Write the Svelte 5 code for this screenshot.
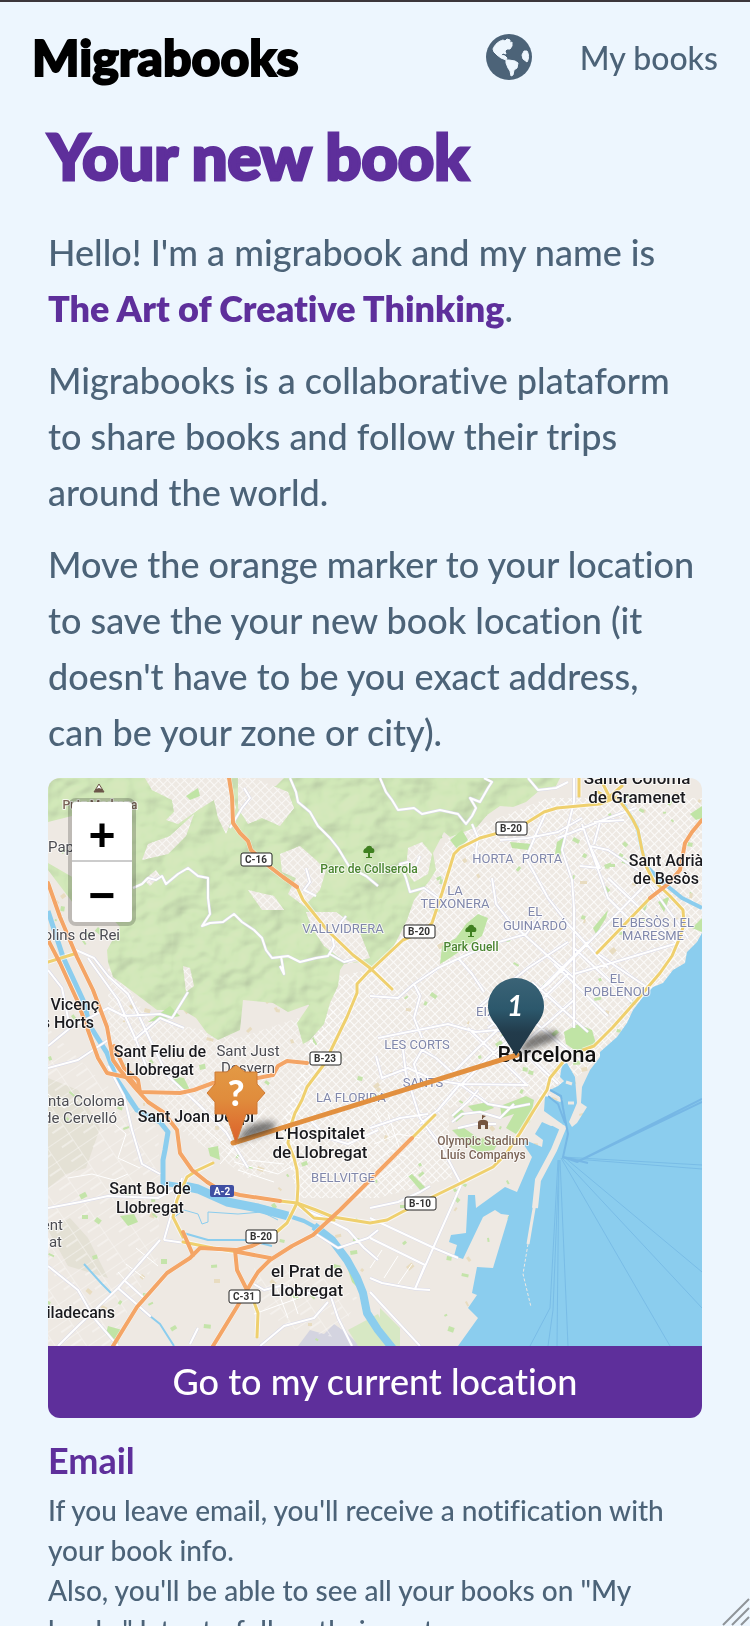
<script lang="ts">
  type Road = { kind: string; d: string };
  type Label = { kind: string; x: number; y: number; text: string; anchor?: string };

  const greens = [
    "M0 0H97L104 8 130 12 150 6 180 0H190L204 10 228 8 236 0H512L508 8 492 12 478 24 465 29 452 28 439 37 429 49 402 59 396 54 385 75 388 92 382 102 366 122 359 142 350 160 342 175 322 192 312 184 296 186 292 192 290 208 282 225 276 246 262 262 255 266 249 245 262 226 240 234 225 225 195 222 192 252 170 262 159 255 148 240 135 232 109 232 88 216 65 199 60 184 59 172 72 149 60 136 25 125 0 92V85L26 100 32 66 24 38 0 44Z",
    "M352 550L332 530V568H352Z", "M330 536L346 568H310L300 552Z",
  ];
  const clearings = [
    "M97 0H180L188 30 178 56 170 40 166 22 150 32 130 46 118 42 126 34 124 22 104 12Z",
    "M190 0H206L240 14 246 30 232 48 214 40 200 46 190 30Z",
    "M146 36L138 58 120 76 94 82 100 66 122 58Z",
    "M232 76L252 68 268 82 278 92 272 112 256 128 240 116 248 100 234 94Z",
    "M200 112L226 118 236 132 214 132Z",
    "M135 188L142 190 146 208 138 214Z",
    "M258 134L288 134 310 150 322 180 300 186 276 168 264 150Z",
    "M360 70L374 64 384 76 380 96 366 104 358 92Z",
    "M96 102L108 92 112 98 102 108Z",
  ];
  const parks = [
    "M418 146L430 136 440 140 434 158 402 180 392 186 394 168 408 160Z",
    "M516 254L530 246 544 252 548 266 532 276 518 266Z",
    "M404 336L412 330 418 336 408 344Z", "M420 328L440 324 446 330 428 336Z",
    "M452 328L478 318 486 322 482 344 468 356 458 350 466 336 454 340Z",
    "M404 352L416 350 430 360 452 362 446 372 430 374 418 366Z",
    "M402 62L414 52 420 62 410 72Z", "M462 64L484 66 480 72 464 70Z",
    "M509 64L518 58 512 78 507 76Z", "M642 36L654 28V40L648 42Z",
    "M610 124L622 118 616 134Z", "M545 150L560 132 558 140 548 156Z",
    "M100 244L122 228 132 238 112 242Z", "M72 438L86 436 90 444 80 448Z",
    "M60 548L74 552 70 566 58 556Z", "M124 298L136 300 142 312 130 310Z",
    "M160 370L170 368 172 382 162 378Z", "M644 150L654 140V154Z",
    "M298 486L310 496 312 512 304 504Z", "M138 18L150 10 152 18 142 22Z",
    "M364 396L378 410 372 412 360 398Z", "M590 130L600 124 596 136Z",
  ];
  const sands = ["M0 410V300L30 312 52 350 38 390 18 396Z", "M0 452L22 440 40 460 60 500 20 488Z"];

  const sea =
    "M654 155L649 164 639 174 637 185 625 192 615 205 605 209 595 219 585 232 579 245 569 259 552 274 552 279 542 292 534 309 533 325 539 329 529 345 524 349 521 344 529 325 527 299 519 285 514 287 512 299 516 303 510 308 502 312 515 322 512 324 497 318 496 333 514 346 503 348 494 344 487 356 495 362 494 369 477 362 476 367 484 379 469 414 457 409 428 430 427 417 420 417 418 455 403 457 401 464 409 467 406 478 415 481 435 439 447 432 453 436 461 437 445 490 429 489 424 515 429 517 420 530 430 540 410 568H654Z";
  const rivers = [
    { w: 5, d: "M0 133L15 179 35 222 42 248 59 275 69 302 89 332 112 344 120 354 117 372 115 382 115 405 145 410" },
    { w: 9, d: "M136 408L150 411 179 424 210 430 240 438" },
    { w: 4, d: "M238 437L256 443 269 450" },
    { w: 8, d: "M266 448L284 462 299 482 309 500 315 515 319 535 330 552 346 572" },
    { w: 4, d: "M572 20L589 49 594 72 599 89 612 102 634 120 654 130" },
    { w: 2, d: "M92 530L112 546 126 568M36 486L54 506 64 516M132 454L160 462 200 462 224 468" },
    { w: 1, d: "M125 440L136 432 150 436 154 446 160 444V434L190 436 214 434 230 442" },
  ];
  const ferries =
    "M514 379L654 387M515 380L654 391M516 379L654 494M514 380L654 530M513 380L622 568M512 382L520 568M511 382L509 568M511 382L505 532 500 568M510 382L502 530 482 568";
  const lanes = "M502 312L513 318 515 330 520 356 515 379 529 384 654 324M500 318L510 326 517 345M529 384L654 321M515 379L540 385";

  const hillRoads =
    "M85 110L94 106 100 100 108 102 114 98 118 106 130 96 140 90 150 98 160 100 160 120 162 136 154 148 162 145 175 144 186 136 194 144 206 152 214 160 218 172 224 180 240 178 252 184 268 180 280 178 286 168 284 156 298 138M242 0L248 14 250 24 262 34 270 48 282 60 290 70 302 90 318 98 330 108M332 0L338 14 344 22 350 32 366 30 374 36 392 32 410 36 418 46 424 38 428 30 422 20 432 24 440 10 444 4 436 0M424 46L430 60 428 72 430 86M372 78L366 92 360 84 352 86 358 100 362 114 376 110 390 120M282 176L296 184 310 180M258 90L262 104 256 112 268 118M480 0L490 12 508 10 520 4M233 178L236 196 232 188M196 10L202 20 194 30 182 50";
  const streets =
    "M28 172L46 180 60 198 80 216 92 240 104 266 120 298 150 326 178 354 200 390M40 180L70 222 88 262 98 288M0 192L14 210 22 250 0 268M22 250L60 230 76 238 112 236 124 240 140 214M86 262L112 240 136 250M0 290L30 282 60 262M0 430L32 424 60 418 110 420 132 408M60 288L76 318 84 352 94 386 112 396M116 462L128 420 134 400M116 462L158 468 210 478M112 462L70 510 30 548 10 568M0 488L30 512 46 540 70 568M70 510L102 538 84 522M76 502L96 520M212 568L236 548 266 540 280 524M252 430L276 440 300 452M268 456L290 470 320 460 330 452M300 452L316 470 330 482M280 510L290 540 304 568M142 566L150 550M206 506L216 512 232 508 250 512 278 520M260 340L280 360 300 366 330 352M322 430L350 424 372 414 382 408M322 440L386 470 410 480M322 460L377 487 367 511 334 505 322 500M413 407L386 468 367 511 382 512M322 514L372 568M328 278L334 300 360 290 386 302 412 306 480 307M355 272L358 296 372 340 394 370 412 404M322 350L352 340 380 336M410 300L388 280 374 272 366 286 374 312M330 260L360 254 400 246 428 254 470 250M322 218L350 220 366 206 390 190 416 178 444 166 478 156 494 136M366 206L372 218 366 240 374 260M410 180L424 196 436 214M444 100L448 126 462 144 480 160 500 178 526 200 526 240M526 0V24L520 48 514 72 524 102 526 130 526 250M500 30L488 56 478 80 500 120 520 146 560 190M452 62L480 60 510 54 534 40M510 60L560 40 588 30M532 88L552 90 542 68 560 72 572 80 590 92M546 66L552 44M546 44L576 42M534 46L560 120 590 150M526 196L560 186 630 165M440 250L500 206 600 104M452 262L520 196M480 262L526 222M464 240L540 164M430 230L480 190 520 164M400 300L430 270 482 222M412 308L440 280 470 254M412 306L390 332 372 346M412 306L440 326 462 330 482 326M404 338L422 322 430 312M440 240L510 306M420 250L480 308M462 224L532 282M484 204L540 254M506 186L560 238M526 170L584 224M550 176L600 210M560 100L630 166M600 104L640 160M404 344L414 336 432 334 452 340 466 326M410 350L428 346 448 346";
  const lanesLocal =
    "M152 330L184 350M160 322L206 370M140 336L196 384M206 348L172 386M218 330L180 376M186 384L230 396 244 388M190 392L226 404M200 382L236 386M0 316L16 330 30 322M60 340L78 356 70 380 92 390M20 400L44 396 66 402 80 396M206 536L262 516M228 508L240 540M240 506L250 536M96 500L78 486M110 488L88 470M86 512L70 494M322 388L344 372 360 380M330 402L352 386M340 414L368 392M326 366L350 356 372 360M334 472L322 490M350 478L336 500M364 486L350 506M340 336L352 372M326 330L342 360";

  const roads: Road[] = [
    { kind: "trunk", d: "M531 0V18" },
    { kind: "trunk", d: "M249 109L255 122 279 152 305 177 322 190 344 211" },
    { kind: "trunk", d: "M322 193L355 162 374 154 384 145 394 115 402 89 406 76 412 70 432 60 472 49 496 34 509 30 552 26 569 19 580 34 585 42 590 52 594 72 598 88 605 102 622 118 635 132 636 146 632 159 624 178 612 195 589 222 565 249 546 268 535 272" },
    { kind: "trunk", d: "M515 284L502 300 499 312 486 332 472 355 458 376 445 389 409 407 372 425 354 434 339 442 322 445 285 439 268 432 249 425" },
    { kind: "trunk", d: "M322 192L309 206 309 215 299 239 282 274 277 285 259 309 254 322 247 335 242 350 240 365 246 380 249 392 250 408 249 425 239 445 224 458" },
    { kind: "trunk", d: "M165 385L148 393 139 399 129 422 125 439 135 459" },
    { kind: "trunk", d: "M199 512L206 524 210 535 209 559" },
    { kind: "trunk", d: "M387 337L364 360" },
    { kind: "trunk", d: "M602 120L549 175" },
    { kind: "trunk", d: "M135 464L165 470 190 474M0 184L26 176" },
    { kind: "trunk", d: "M232 423L249 425 266 440 286 442" },
    { kind: "trunk", d: "M550 14L560 20 574 8M552 0L560 16" },
    { kind: "motorway", d: "M181 0L184 19 185 45 192 55 200 63 203 72 214 82 222 89 235 99 249 109" },
    { kind: "motorway", d: "M0 105L12 139 29 179 45 212 59 249 65 282 72 292 89 312 100 324 115 334 129 352 132 375 144 392 159 404 172 412 192 417 232 423" },
    { kind: "motorway", d: "M0 162L12 185 29 222 50 280 59 295 82 300 92 314 132 315 146 312 165 305 200 302 225 297 230 288 239 283 259 285" },
    { kind: "motorway", d: "M66 268L76 290 90 302 92 314" },
    { kind: "motorway", d: "M224 458L204 468 189 472 152 470 142 480 119 495 89 529 76 550 65 568" },
    { kind: "motorway", d: "M364 360L329 395 292 432 265 457 244 468 222 482 210 494 205 502 195 519 165 568" },
    { kind: "motorway", d: "M135 454L145 477M187 472L189 492 199 512M190 474L222 480" },
    { kind: "motorway", d: "M654 42L644 54 637 65 632 92 620 106 602 120" },
  ];

  const shields = [
    { x: 208, y: 81, text: "C-16" }, { x: 463, y: 50, text: "B-20" },
    { x: 371, y: 153, text: "B-20" }, { x: 277, y: 280, text: "B-23" },
    { x: 213, y: 458, text: "B-20" }, { x: 196, y: 518, text: "C-31" },
    { x: 372, y: 425, text: "B-10" },
  ];

  const labels: Label[] = [
    { kind: "peak", x: 52, y: 31, text: "Puig Madrona" },
    { kind: "town", x: 0, y: 74, text: "Papiol", anchor: "start" },
    { kind: "town", x: 72, y: 162, text: "Molins de Rei", anchor: "end" },
    { kind: "town", x: 200, y: 278, text: "Sant Just" },
    { kind: "town", x: 200, y: 295, text: "Desvern" },
    { kind: "town", x: 77, y: 328, text: "Santa Coloma", anchor: "end" },
    { kind: "town", x: 69, y: 345, text: "de Cervelló", anchor: "end" },
    { kind: "town", x: 15, y: 452, text: "Sant Vicent", anchor: "end" },
    { kind: "town", x: 14, y: 469, text: "Begat", anchor: "end" },
    { kind: "city", x: 51, y: 232, text: "Sant Vicenç", anchor: "end" },
    { kind: "city", x: 46, y: 250, text: "dels Horts", anchor: "end" },
    { kind: "city", x: 112, y: 279, text: "Sant Feliu de" },
    { kind: "city", x: 112, y: 297, text: "Llobregat" },
    { kind: "city", x: 148, y: 344, text: "Sant Joan Despí" },
    { kind: "city", x: 102, y: 416, text: "Sant Boi de" },
    { kind: "city", x: 102, y: 435, text: "Llobregat" },
    { kind: "city", x: 67, y: 540, text: "Viladecans", anchor: "end" },
    { kind: "city large", x: 259, y: 499, text: "el Prat de" },
    { kind: "city large", x: 259, y: 518, text: "Llobregat" },
    { kind: "city large", x: 272, y: 361, text: "L'Hospitalet" },
    { kind: "city large", x: 272, y: 380, text: "de Llobregat" },
    { kind: "city large", x: 589, y: 6, text: "Santa Coloma" },
    { kind: "city large", x: 589, y: 25, text: "de Gramenet" },
    { kind: "city", x: 618, y: 88, text: "Sant Adrià" },
    { kind: "city", x: 618, y: 106, text: "de Besòs" },
    { kind: "capital", x: 499, y: 284, text: "Barcelona" },
    { kind: "district", x: 295, y: 155, text: "VALLVIDRERA" },
    { kind: "district", x: 445, y: 85, text: "HORTA" },
    { kind: "district", x: 494, y: 85, text: "PORTA" },
    { kind: "district", x: 407, y: 117, text: "LA" },
    { kind: "district", x: 407, y: 130, text: "TEIXONERA" },
    { kind: "district", x: 487, y: 138, text: "EL" },
    { kind: "district", x: 487, y: 152, text: "GUINARDÓ" },
    { kind: "district", x: 605, y: 149, text: "EL BESÒS I EL" },
    { kind: "district", x: 605, y: 162, text: "MARESME" },
    { kind: "district", x: 569, y: 205, text: "EL" },
    { kind: "district", x: 569, y: 218, text: "POBLENOU" },
    { kind: "district", x: 428, y: 238, text: "EIXAMPLE", anchor: "start" },
    { kind: "district", x: 369, y: 271, text: "LES CORTS" },
    { kind: "district", x: 375, y: 309, text: "SANTS" },
    { kind: "district", x: 303, y: 324, text: "LA FLORIDA" },
    { kind: "district", x: 295, y: 404, text: "BELLVITGE" },
    { kind: "park", x: 321, y: 95, text: "Parc de Collserola" },
    { kind: "park", x: 423, y: 173, text: "Park Guell" },
    { kind: "sight", x: 435, y: 367, text: "Olympic Stadium" },
    { kind: "sight", x: 435, y: 381, text: "Lluís Companys" },
  ];

  // small squares and gardens scattered over the built-up area
  let seed = 7;
  function rand() {
    seed = (seed * 16807) % 2147483647;
    return seed / 2147483647;
  }
  const gardens = Array.from({ length: 320 }, () => ({
    x: Math.round(rand() * 654),
    y: Math.round(rand() * 568),
    w: 2 + Math.round(rand() * 5),
    h: 2 + Math.round(rand() * 3),
    r: Math.round(rand() * 90) - 45,
    sand: rand() > 0.7,
  }));

  function locate() {
    navigator.geolocation?.getCurrentPosition(() => {});
  }
</script>

<div class="page">
  <header>
    <a class="brand" href="/">Migrabooks</a>
    <nav>
      <a href="/map" aria-label="Map">
        <svg class="globe" viewBox="0 0 46 46" aria-hidden="true">
          <circle cx="23" cy="23" r="23" fill="#4c6378" />
          <path
            d="M7 15C9 10 13 7 17 6L19 7 21 5 24 6V9L26 8 26 12 24 15 21 15 19 17 20 20 17 19 15 21 19 22 21 24 20 26 23 26 29 27 32 29 31 34 28 36 27 41 25 42 24 37 22 34 20 29 20 26 15 24 11 21 8 18ZM41 17C43 20 43 25 41 28L37 25 36 21 38 17Z"
            fill="#edf6fe" stroke="#edf6fe" stroke-width="1" stroke-linejoin="round"
          />
        </svg>
      </a>
      <a href="/books">My books</a>
    </nav>
  </header>

  <main>
    <h1>Your new book</h1>
    <p>Hello! I'm a migrabook and my name is <strong>The Art of Creative Thinking</strong>.</p>
    <p>Migrabooks is a collaborative plataform to share books and follow their trips around the world.</p>
    <p>
      Move the orange marker to your location to save the your new book location (it doesn't have
      to be you exact address,<br />can be your zone or city).
    </p>

    <section class="location">
      <div class="map">
        <svg class="tiles" viewBox="0 0 654 568" preserveAspectRatio="xMidYMid slice" role="img" aria-label="Map of Barcelona">
          <defs>
            <pattern id="blocks" width="6" height="6" patternUnits="userSpaceOnUse" patternTransform="rotate(-44)">
              <path d="M0 0H6M0 0V6" stroke="#fff" stroke-width="2" fill="none" opacity="0.8" />
            </pattern>
            <pattern id="fields" width="26" height="17" patternUnits="userSpaceOnUse" patternTransform="rotate(-34)">
              <path d="M0 0H26M0 0V17M13 8H26" stroke="#faf8f6" stroke-width="1" fill="none" />
            </pattern>
            <filter id="relief" x="0" y="0" width="100%" height="100%">
              <feTurbulence type="fractalNoise" baseFrequency="0.024 0.03" numOctaves="3" seed="4" />
              <feDiffuseLighting surfaceScale="10" lighting-color="#e4ffc8" diffuseConstant="1.25">
                <feDistantLight azimuth="225" elevation="52" />
              </feDiffuseLighting>
              <feComposite operator="in" in2="SourceAlpha" />
            </filter>
            <filter id="soft" x="-50%" y="-50%" width="200%" height="200%">
              <feGaussianBlur stdDeviation="3" />
            </filter>
            <linearGradient id="teal" x2="0" y2="1">
              <stop offset="0" stop-color="#3b6376" />
              <stop offset="0.4" stop-color="#2c586c" />
              <stop offset="0.7" stop-color="#223b4b" />
              <stop offset="1" stop-color="#203746" />
            </linearGradient>
            <linearGradient id="amber" gradientUnits="userSpaceOnUse" x1="0" y1="286" x2="0" y2="365">
              <stop offset="0" stop-color="#e39a45" />
              <stop offset="0.45" stop-color="#e08c3c" />
              <stop offset="1" stop-color="#dc5f2a" />
            </linearGradient>
          </defs>

          <rect width="654" height="568" fill="#eee9e3" />
          {#each sands as d}<path {d} fill="#e4e1d5" />{/each}
          <path d="M250 568L262 552 276 556 286 546 300 556 312 568Z" fill="#d4d4e0" />
          <path d="M280 200L330 190 400 60 500 20H654V180L540 290 500 320 480 318 400 330 404 400 330 420 250 420 232 350 250 300Z" fill="url(#blocks)" />
          <path d="M60 180L100 240 190 260 250 240 290 230 250 320 250 390 200 400 130 350 100 300 60 260Z" fill="url(#blocks)" opacity="0.7" />
          <path d="M0 250L50 300 110 350 112 400 110 480 60 568H0Z" fill="url(#fields)" />
          <path d="M206 490L240 480 310 520 290 560 240 550 214 530Z" fill="url(#fields)" />
          {#each gardens as g}
            <rect x={g.x} y={g.y} width={g.w} height={g.h} transform="rotate({g.r} {g.x} {g.y})" fill={g.sand ? "#e8dcc0" : "#c4e4aa"} />
          {/each}
          {#each greens as d}<path {d} fill="#d7e8c4" />{/each}
          <path class="relief" d={greens[0]} filter="url(#relief)" />
          {#each clearings as d}
            <path {d} fill="#eee9e3" />
            <path {d} fill="url(#blocks)" opacity="0.8" />
          {/each}
          {#each parks as d}<path {d} fill="#c0e4a5" />{/each}

          <path d={sea} fill="#8bcdee" />
          <path d="M489 336L515 350 506 372 490 402 487 430" class="pier wide" />
          <path d="M487 425L483 448 480 466" class="pier" />
          <path d="M480 466L475 496 483 529" class="pier dashed" />
          <path d="M502 314L512 321M518 304L524 306M520 325L526 325" class="pier" />
          <path d={ferries} class="ferry" />
          <path d={lanes} class="lane" />
          {#each rivers as r}
            <path d={r.d} fill="none" stroke="#8bcdee" stroke-width={r.w} stroke-linejoin="round" />
          {/each}

          <path d={lanesLocal} class="local" />
          <path d={streets} class="casing" />
          <path d={streets} class="street" />
          <path d={hillRoads} class="casing" />
          <path d={hillRoads} class="street" />
          {#each roads as r}<path d={r.d} class="road-edge" />{/each}
          {#each roads as r}<path d={r.d} class="road {r.kind}" />{/each}

          {#each shields as s}
            <rect class="shield" x={s.x - 15} y={s.y - 6} width="31" height="13" rx="2" />
            <text class="ref" x={s.x} y={s.y + 4}>{s.text}</text>
          {/each}
          <rect x="162" y="407" width="24" height="12" rx="2" fill="#3f4fa3" />
          <text class="ref light" x="174" y="417">A-2</text>

          {#each labels as l}
            <text class="label {l.kind}" x={l.x} y={l.y} text-anchor={l.anchor ?? "middle"}>{l.text}</text>
          {/each}

          <path d="M51 6L56 14H46Z" fill="#fff" stroke="#6b5548" stroke-width="1" />
          <path d="M48 11L51 10 54 11 56 14H46Z" fill="#6b5548" />
          {#each [[321, 74], [423, 153]] as [x, y]}
            <g transform="translate({x} {y})" fill="#3f8020">
              <path d="M-5 1C-7-1-4-4-3-4-2-7 3-7 3-4 6-4 6 1 4 1Z" />
              <path d="M-1 0H1V5H3V6H-3V5H-1Z" />
            </g>
          {/each}
          <g fill="#74543f">
            <path d="M430 344C431 341 439 341 440 344V351H437V347H433V351H430Z" />
            <path d="M434 341V337L438 338 435 340V341Z" />
          </g>

          <path d="M470 276L478 262Q492 252 508 254 516 258 502 264Z" fill="#222" opacity="0.6" filter="url(#soft)" />
          <path d="M185 365L469 277" stroke="#e2903f" stroke-width="5" stroke-linecap="round" />
          <path d="M187 365L196 352Q208 342 226 344 232 350 216 356Z" fill="#222" opacity="0.6" filter="url(#soft)" />

          <path d="M468 278L448 247C443 241 440 235 440 228A28 28 0 0 1 496 228C496 235 493 241 488 247Z" fill="url(#teal)" />
          <text class="pin-text italic" x="467" y="238">1</text>
          <path
            d="M188 287L197 294H209V306L217 315 209 324V336H198L188 365 178 336H167V324L159 315 167 306V294H179Z"
            fill="url(#amber)" stroke="#cf7a35" stroke-width="1" stroke-linejoin="round"
          />
          <text class="pin-text" x="188" y="328">?</text>
        </svg>

        <div class="zoom">
          <button type="button" aria-label="Zoom in">+</button>
          <button type="button" aria-label="Zoom out">−</button>
        </div>
      </div>
      <button type="button" class="locate" onclick={locate}>Go to my current location</button>
    </section>

    <h2>Email</h2>
    <p class="hint">
      If you leave email, you'll receive a notification with your book info.<br />
      Also, you'll be able to see all your books on "My books" later to follow their route.
    </p>
  </main>

  <svg class="grip" viewBox="0 0 28 28" aria-hidden="true">
    <path d="M1 27L27 1M10 27L27 10M19 27L27 19" />
  </svg>
</div>

<style>
  :global(body) {
    margin: 0;
    background: #edf6fe;
  }
  .page {
    position: relative;
    box-sizing: border-box;
    height: 100vh;
    overflow: hidden;
    border-top: 2px solid #3c363b;
    background: #edf6fe;
    color: #4c6378;
    font-family: Lato, "Noto Sans", sans-serif;
    font-weight: 500;
    font-variant-ligatures: none;
  }
  header {
    display: flex;
    align-items: center;
    justify-content: space-between;
    height: 110px;
    padding: 0 32px;
  }
  .brand {
    color: #000;
    font-size: 50px;
    font-weight: 900;
    text-decoration: none;
    -webkit-text-stroke: 2px #000;
    stroke-linejoin: round;
  }
  nav { display: flex; align-items: center; gap: 48px; font-size: 32px; }
  nav a { color: inherit; text-decoration: none; }
  .globe { display: block; width: 46px; height: 46px; }

  main { padding: 8px 48px 0; }
  h1 {
    margin: 0 0 32px;
    color: #5e2f9b;
    font-size: 63px;
    line-height: 72px;
    font-weight: 900;
    -webkit-text-stroke: 3px #5e2f9b;
    stroke-linejoin: round;
  }
  p { margin: 0 0 16px; font-size: 36px; line-height: 56px; }
  strong { color: #5e2f9b; font-weight: 800; }

  .location { margin-top: 18px; border-radius: 12px; overflow: hidden; }
  .map { position: relative; height: 568px; }
  .tiles { display: block; width: 100%; height: 100%; }
  .relief { opacity: 0.28; mix-blend-mode: multiply; }
  .pier { fill: none; stroke: #eee9e3; stroke-width: 3; }
  .pier.wide { stroke-width: 6; }
  .pier.dashed { stroke-width: 1; stroke-dasharray: 3 2; }
  .ferry { fill: none; stroke: #79bce6; stroke-width: 1; }
  .lane { fill: none; stroke: #76b7e5; stroke-width: 2; }
  .local { fill: none; stroke: #fff; stroke-width: 1; }
  .casing { fill: none; stroke: #d9d9e8; stroke-width: 3; stroke-linejoin: round; }
  .street { fill: none; stroke: #fff; stroke-width: 2; stroke-linejoin: round; }
  .road-edge { fill: none; stroke: #fff; stroke-width: 5; stroke-linejoin: round; opacity: 0.6; }
  .road { fill: none; stroke-width: 3; stroke-linejoin: round; stroke-linecap: round; }
  .trunk { stroke: #efd06e; }
  .motorway { stroke: #f4a566; stroke-width: 4; }

  .shield { fill: #fff; stroke: #222; stroke-width: 1; }
  .ref { font: 700 10px Roboto, sans-serif; fill: #333; text-anchor: middle; }
  .ref.light { fill: #fff; }
  .label {
    font-family: Roboto, sans-serif;
    font-size: 16px;
    font-weight: 400;
    paint-order: stroke;
    stroke: rgba(255, 255, 255, 0.75);
    stroke-width: 2px;
    stroke-linejoin: round;
  }
  .city { fill: #1b1b1f; font-weight: 500; }
  .city.large { font-size: 17px; }
  .capital { fill: #111; font-size: 22px; font-weight: 500; }
  .town { fill: #4c4c52; font-size: 15px; }
  .district { fill: #8087ab; font-size: 13px; }
  .park { fill: #4a8430; font-size: 12px; font-weight: 500; }
  .sight, .peak { fill: #7c6558; font-size: 12px; font-weight: 500; }
  .pin-text { font: 900 36px Lato, sans-serif; fill: #fff; text-anchor: middle; }
  .italic { font-size: 28px; font-weight: 700; font-style: italic; }

  .zoom {
    position: absolute;
    top: 20px;
    left: 20px;
    display: flex;
    flex-direction: column;
    border: 4px solid rgba(0, 0, 0, 0.2);
    border-radius: 8px;
    background-clip: padding-box;
  }
  .zoom button {
    box-sizing: border-box;
    width: 60px;
    height: 60px;
    padding: 14px 0 0;
    border: 0;
    background: #fff;
    color: #000;
    font: 700 46px/46px "Liberation Mono", monospace;
  }
  .zoom button:first-child { border-bottom: 2px solid #ccc; border-radius: 4px 4px 0 0; }
  .zoom button:last-child { border-radius: 0 0 4px 4px; }

  .locate {
    display: block;
    width: 100%;
    height: 72px;
    padding: 0 0 2px;
    border: 0;
    background: #5e2f9b;
    color: #fff;
    font: 500 36px Lato, "Noto Sans", sans-serif;
    font-variant-ligatures: none;
    cursor: pointer;
  }
  h2 {
    margin: 14px 0 2px;
    color: #5e2f9b;
    font-size: 36px;
    line-height: 56px;
    font-weight: 700;
  }
  .hint { font-size: 28px; line-height: 40px; }
  .grip { position: absolute; right: 0; bottom: 0; width: 28px; height: 28px; }
  .grip path { fill: none; stroke: #8f9499; stroke-width: 2; }
</style>
